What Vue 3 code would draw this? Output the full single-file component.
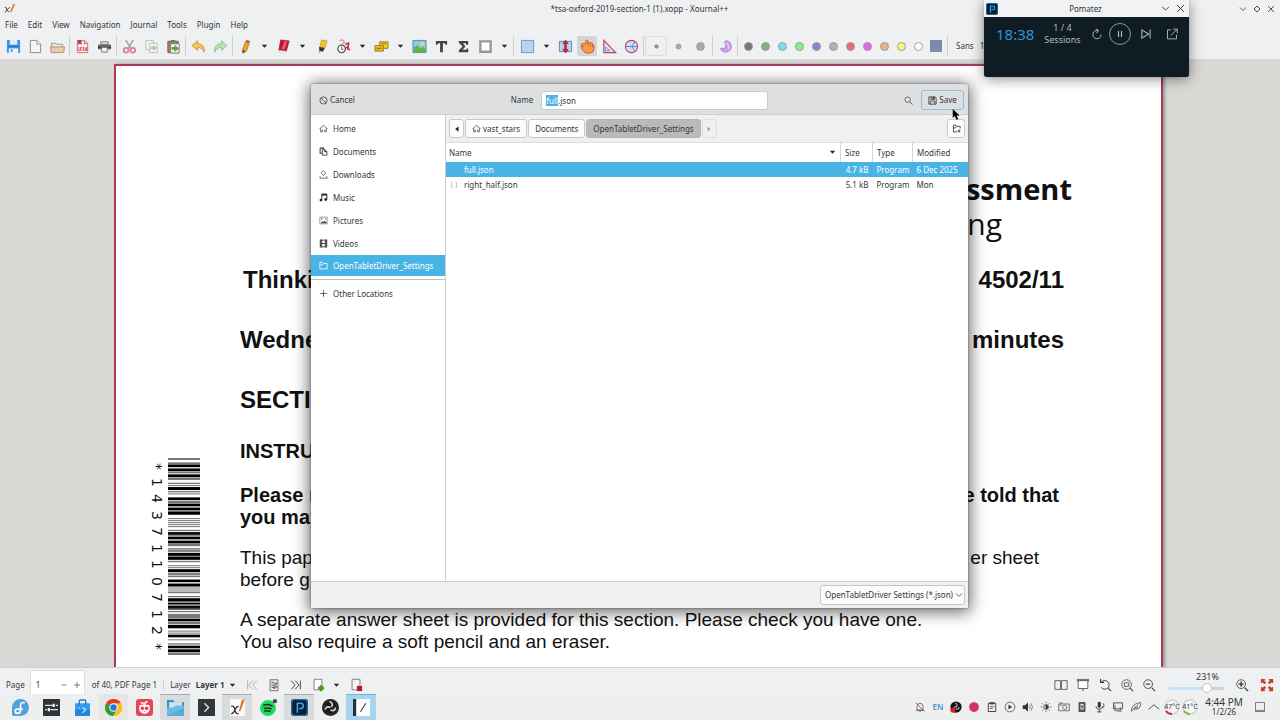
<template>
  <div class="desktop">
    <header class="titlebar">
      <Icon name="xournal" class="title-icon" />
      <h1 class="window-title">*tsa-oxford-2019-section-1 (1).xopp - Xournal++</h1>
      <div class="window-buttons">
        <button aria-label="Minimize"><Icon name="chevron" /></button>
        <button aria-label="Maximize"><Icon name="diamond" /></button>
        <button aria-label="Close"><Icon name="close" /></button>
      </div>
    </header>

    <nav class="menubar">
      <button v-for="item in menus" :key="item">{{ item }}</button>
    </nav>

    <div class="toolbar">
      <div v-for="(group, i) in toolGroups" :key="i" class="tool-group" :class="{ roomy: i === 4 }">
        <button
          v-for="(tool, j) in group"
          :key="j"
          :class="[tool === 'arrow' ? 'tool-arrow' : 'tool', { active: tool === 'hand', boxed: tool === 'dotSmall' }]"
          :aria-label="tool"
        >
          <Icon :name="tool" />
        </button>
      </div>
      <div class="tool-group palette">
        <button v-for="color in colors" :key="color" class="color" :aria-label="'Color ' + color">
          <span class="color-dot" :style="{ background: color }"></span>
        </button>
        <button class="color" aria-label="Custom color"><span class="color-square"></span></button>
      </div>
      <button class="font-button">Sans <span>1</span></button>
    </div>

    <main class="workspace">
      <article class="page">
        <div class="barcode">
          <div class="barcode-digits">
            <span v-for="(c, i) in '*1437110712*'" :key="i">{{ c }}</span>
          </div>
          <svg class="barcode-bars" viewBox="0 24 96 590" preserveAspectRatio="none">
            <rect v-for="(bar, i) in bars" :key="i" x="0" width="96" :y="bar[0]" :height="bar[1] - bar[0]" :fill="bar[2] ? '#000' : '#777'" />
          </svg>
        </div>
        <div class="page-text">
          <div class="logo-line strong">ssment</div>
          <div class="logo-line second">ng</div>
          <h2 class="indent"><span>Thinki</span><span>4502/11</span></h2>
          <h2><span>Wedne</span><span>minutes</span></h2>
          <h2><span>SECTI</span></h2>
          <h3>INSTRU</h3>
          <p class="bold">
            <span class="row"><span>Please r</span><span>e told that</span></span>
            <span class="row">you may</span>
          </p>
          <p class="short">
            <span class="row"><span>This pap</span><span>er sheet</span></span>
            <span class="row">before g</span>
          </p>
          <p>
            <span class="row">A separate answer sheet is provided for this section. Please check you have one.</span>
            <span class="row">You also require a soft pencil and an eraser.</span>
          </p>
        </div>
      </article>
    </main>

    <footer class="statusbar">
      <label for="page-number">Page</label>
      <div class="spinner">
        <input id="page-number" type="text" value="1" />
        <button aria-label="Previous page"><Icon name="minus" /></button>
        <button aria-label="Next page"><Icon name="plus" /></button>
      </div>
      <span class="page-count">of 40, PDF Page 1</span>
      <span class="layer-label">Layer</span>
      <button class="layer-button">Layer 1</button>
      <button class="tool-arrow" aria-label="Choose layer"><Icon name="arrow" /></button>
      <button v-for="name in ['first', 'notePage', 'last', 'pageAdd']" :key="name" class="tool" :aria-label="name"><Icon :name="name" /></button>
      <button class="tool-arrow" aria-label="Page options"><Icon name="arrow" /></button>
      <button class="tool" aria-label="Delete page"><Icon name="pageDelete" /></button>
      <div class="zoom-tools">
        <button v-for="name in ['dual', 'present', 'zoomReset', 'zoomFit', 'zoomOut']" :key="name" class="tool" :aria-label="name"><Icon :name="name" /></button>
        <div class="zoom-slider">
          <label for="zoom">231%</label>
          <input id="zoom" type="range" min="0" max="100" value="74" />
        </div>
        <button class="tool" aria-label="Zoom in"><Icon name="zoomIn" /></button>
        <button class="tool fullscreen" aria-label="Fullscreen"><Icon name="fullscreen" /></button>
      </div>
    </footer>

    <div class="taskbar">
      <button v-for="task in tasks" :key="task.icon" class="task" :class="task.state" :aria-label="task.icon">
        <Icon :name="task.icon" />
      </button>
      <div class="tray">
        <template v-for="item in tray" :key="item">
          <span v-if="item === 'EN'" class="tray-item lang">EN</span>
          <button v-else class="tray-item" :aria-label="item"><Icon :name="item" /></button>
        </template>
        <span class="temp"><Icon name="gaugeRed" /><span>47°C</span></span>
        <span class="temp"><Icon name="gaugeGreen" /><span>41°C</span></span>
        <div class="clock"><span class="time">4:44 PM</span><span>1/2/26</span></div>
        <button class="tray-item" aria-label="Show desktop"><Icon name="desktop" /></button>
      </div>
    </div>

    <div class="dialog-layer">
      <form class="dialog" role="dialog" aria-label="Save file" @submit.prevent>
        <div class="dialog-head">
          <button type="button" class="cancel"><Icon name="cancel" />Cancel</button>
          <div class="name-field">
            <label for="file-name">Name</label>
            <input id="file-name" ref="nameInput" type="text" value="full.json" />
          </div>
          <div class="head-actions">
            <button type="button" class="search" aria-label="Search"><Icon name="search" /></button>
            <button type="submit" class="save"><Icon name="floppy" />Save</button>
          </div>
        </div>

        <div class="dialog-body">
          <aside class="places">
            <button v-for="place in places" :key="place.label" type="button" class="place" :class="{ selected: place.selected }">
              <Icon :name="place.icon" />{{ place.label }}
            </button>
            <hr />
            <button type="button" class="place"><Icon name="plus" />Other Locations</button>
          </aside>

          <section class="files">
            <div class="pathbar">
              <button type="button" class="step" aria-label="Back"><Icon name="triLeft" /></button>
              <button type="button" class="crumb"><Icon name="home" />vast_stars</button>
              <button type="button" class="crumb">Documents</button>
              <button type="button" class="crumb current">OpenTabletDriver_Settings</button>
              <button type="button" class="step faded" aria-label="Forward"><Icon name="triRight" /></button>
              <button type="button" class="new-folder" aria-label="New folder"><Icon name="folderNew" /></button>
            </div>
            <table>
              <thead>
                <tr>
                  <th class="col-name"><span>Name<Icon name="arrow" /></span></th>
                  <th class="col-size">Size</th>
                  <th class="col-type">Type</th>
                  <th class="col-date">Modified</th>
                </tr>
              </thead>
              <tbody>
                <tr v-for="file in files" :key="file.name" :class="{ selected: file.selected }">
                  <td><span class="file-name"><Icon name="json" />{{ file.name }}</span></td>
                  <td class="size">{{ file.size }}</td>
                  <td>{{ file.type }}</td>
                  <td>{{ file.modified }}</td>
                </tr>
              </tbody>
            </table>
          </section>
        </div>

        <div class="dialog-foot">
          <div class="filter">
            <select aria-label="File type">
              <option>OpenTabletDriver Settings (*.json)</option>
            </select>
            <Icon name="chevron" />
          </div>
        </div>
        <Icon name="pointer" class="pointer" />
      </form>
    </div>

    <section class="pomatez">
      <div class="pomatez-title">
        <Icon name="pomatez" class="pomatez-logo" />
        <h2>Pomatez</h2>
        <button aria-label="Minimize timer"><Icon name="chevron" /></button>
        <button aria-label="Close timer"><Icon name="close" /></button>
      </div>
      <div class="pomatez-body">
        <span class="timer">18:38</span>
        <span class="sessions"><span>1 / 4</span><span>Sessions</span></span>
        <button aria-label="Restart"><Icon name="restart" /></button>
        <button class="pause" aria-label="Pause"><Icon name="pause" /></button>
        <button aria-label="Skip"><Icon name="skip" /></button>
        <button class="expand" aria-label="Expand"><Icon name="external" /></button>
      </div>
    </section>
  </div>
</template>

<script setup>
import { h, onMounted, ref } from "vue";

const icons = {
  xournal: '<path d="M1 6q2-1 2.500 2T7 12M8 6q-2 0-3.500 3T1 12" fill="none" stroke="#444" stroke-width="1.300"/><path d="M8 12l4-10 3-1-5 11z" fill="#d8752e"/>',
  chevron: '<path d="M2 5l6 6 6-6" fill="none" stroke="currentColor" stroke-width="1.600"/>',
  diamond: '<path d="M8 2l6 6-6 6-6-6z" fill="none" stroke="currentColor" stroke-width="1.800"/>',
  close: '<path d="M2 2l12 12M14 2L2 14" fill="none" stroke="currentColor" stroke-width="1.700"/>',
  arrow: '<path d="M2 4h12l-6 7z" fill="#222"/>',
  save: '<path d="M1 1h14v14H2l-1-1z" fill="#3f92e6"/><path d="M4 1h8v5H4z" fill="#dcecfb"/><path d="M3 10h10v5H3z" fill="#eef5fc"/><path d="M2 8h12" stroke="#1d6cc2"/><path d="M5 11h2v3H5z" fill="#3f92e6"/>',
  newDoc: '<path d="M2.500 1.500h7l4 4v9h-11z" fill="#f4f4f4" stroke="#888"/><path d="M9.500 1.500v4h4" fill="#fff" stroke="#888"/>',
  open: '<path d="M1.500 13V4.500h4l1 1h7V13z" fill="#eee4d2" stroke="#999"/><path d="M.5 8.500h15l-1 6h-13z" fill="#e9cda3" stroke="#a9947a"/>',
  pdf: '<path d="M2.500 1.500h8l3 3v10h-11z" fill="#f8eeee" stroke="#b77"/><path d="M3 1h4v5l-2-1-2 1z" fill="#c8364a"/><path d="M10 2v3h3" fill="none" stroke="#b55"/><path d="M3 8.500h10v4H3z" fill="#dd4b56"/><path d="M4 12V9h1v2M7 9v3h1V9M10 12V9h2M10 10.500h1.500" stroke="#fff" fill="none" stroke-width=".8"/>',
  print: '<path d="M4 3h8v3H4z" fill="#ddd" stroke="#777"/><path d="M1 6h14v5H1z" fill="#66696b"/><path d="M1 9h14" stroke="#333"/><path d="M5 9h6v5H5z" fill="#f5f5f5" stroke="#777"/>',
  cut: '<path d="M4 1l6 10M12 1L6 11" stroke="#aaa" stroke-width="1.800"/><circle cx="4.500" cy="12" r="2.500" fill="none" stroke="#dc8594" stroke-width="2"/><circle cx="11.500" cy="12" r="2.500" fill="none" stroke="#dc8594" stroke-width="2"/>',
  copy: '<g opacity=".5"><path d="M2 1.500h8v10H2z" fill="#f6f6f6" stroke="#888"/><path d="M6 4.500h8v10H6z" fill="#fff" stroke="#888"/><path d="M7 8h3V6l4 3.500-4 3.500v-2H7z" fill="#62b13c"/></g>',
  paste: '<path d="M2 2.500h11v12H2z" fill="#a5855a" stroke="#6f5a3c"/><path d="M5 1h5v3H5z" fill="#777"/><path d="M5 5h9v10H5z" fill="#f6f6f6" stroke="#777"/><path d="M6 8.500h3V6l5 4-5 4v-2.500H6z" fill="#58a52f"/>',
  undo: '<path d="M1 7l6-5v3c5 0 8 3 7 9-1-3-3-5-7-5v3z" fill="#f6c655" stroke="#c98e22" stroke-width=".9"/>',
  redo: '<path d="M15 7L9 2v3C4 5 1 8 2 14c1-3 3-5 7-5v3z" fill="#b5e2ad" stroke="#86c080" stroke-width=".9"/>',
  pencil: '<path d="M5 11L8 3l4 1-3 9-4 2z" fill="#f0a42c" stroke="#a5601b" stroke-width=".7"/><path d="M8 3l1-2 4 1-1 2z" fill="#cf4a3f"/><path d="M5 12v3l3-2z" fill="#333"/>',
  eraser: '<path d="M5 1l9 1-3 11-8-1z" fill="#c5122a" stroke="#8a1b2a" stroke-width=".7"/><path d="M9 2l3 .5-3 9-3-1z" fill="#e85b6a"/><path d="M3 12l8 1-1 2-7-1z" fill="#f2f2f2" stroke="#bbb" stroke-width=".4"/>',
  highlighter: '<path d="M8 1l6 1-2 7H6z" fill="#f4c136" stroke="#b58a2a" stroke-width=".6"/><path d="M5.500 8.500l6 1-2 4-4-1z" fill="#333"/><path d="M5 12.500l3 1-3 2z" fill="#e7bb2d"/>',
  recognizer: '<circle cx="6" cy="10.500" r="4" fill="#fff" stroke="#555" stroke-width="1.400"/><path d="M6 8v3h2" fill="none" stroke="#555"/><path d="M4 2q2-2 4 0t-1 3" fill="none" stroke="#e08a98" stroke-width="1.300"/><path d="M10 6q5-4 3 1t2 4M10 9h4" fill="none" stroke="#cf2b39" stroke-width="1.700"/>',
  shapes: '<path d="M6 3h9v7H6z" fill="#efc726" stroke="#9a8227"/><path d="M1 7h9v6H1z" fill="#e7b71e" stroke="#9a8227"/><path d="M3 10h5M8 5h5" stroke="#8a731f"/>',
  image: '<path d="M1 1.500h14v13H1z" fill="#8bcbf3" stroke="#5387b5"/><circle cx="11" cy="5" r="2" fill="#f6d540"/><path d="M1.500 14V10l4-4 4 4 2-2 3 3v3z" fill="#65b447"/>',
  text: '<path d="M2 2h12v4h-1.500l-1-1.500H9.500V14h-3V4.500h-2L3.500 6H2z" fill="#444"/>',
  sigma: '<path d="M3 2h10v4h-2l-.5-1.500H7.500L10 8l-3 3.500h4l.5-1.500H13v4H3v-2l4-4-4-4z" fill="#444"/>',
  square: '<path d="M2.500 2.500h11v11h-11z" fill="#fff" stroke="#999" stroke-width="2.600"/>',
  rect: '<path d="M1.500 1.500h13v13h-13z" fill="#b8d2f2" stroke="#7293c9"/>',
  vertical: '<path d="M1.500 2.500h13v11h-13z" fill="#b9d0ef" stroke="#6b7cab"/><path d="M8 1L5 5h2v6H5l3 4 3-4H9V5h2z" fill="#b52c3e" stroke="#7a1c2e" stroke-width=".5"/>',
  hand: '<path d="M1 6q2-2 4-1l1 1V2.500q0-1.500 1.200-1.500T8.500 2.500V5q0-1.500 1.200-1.500T11 5q0-1 1.200-1t1.200 1.500V6.500q1.500-.5 1.500 1V10q0 4.500-4 5H7q-2 0-3-2L1 9q-.5-2 1.500-1.500L4 8.500z" fill="#f69a4e" stroke="#cf5a24"/><path d="M8.500 5v3M11 5v3M13.300 6.500V9" stroke="#cf5a24" stroke-width=".7"/>',
  setsquare: '<path d="M2 1.500l12.500 13H2z" fill="#dbe4f6" stroke="#b94660" stroke-width="1.300"/><path d="M4 8.500l4 4H4z" fill="#f7f7fb" stroke="#6b86c9"/>',
  compass: '<circle cx="8" cy="8" r="6.500" fill="#cfdef5" stroke="#b94660" stroke-width="1.200"/><path d="M2 8h12M8 8l4-5M8 8l4 5" stroke="#5c7ec5" fill="none"/>',
  dotSmall: '<circle cx="8" cy="8" r="1.900" fill="#999" stroke="#777" stroke-width=".7"/>',
  dotMedium: '<circle cx="8" cy="8" r="2.700" fill="#aaa" stroke="#888" stroke-width=".6"/>',
  dotLarge: '<circle cx="8" cy="8" r="4.200" fill="#aaa" stroke="#888" stroke-width=".6"/>',
  fill: '<path d="M8 2a6 6 0 1 1-5 9q-1-2 2-1t3-3-1-3 1-2z" fill="#c9a2e8" stroke="#a583c5"/><path d="M8 4q5 2 3 7" fill="none" stroke="#e4cdf5" stroke-width="1.500"/>',
  minus: '<path d="M3 8h10" stroke="currentColor" stroke-width="1.200"/>',
  plus: '<path d="M2 8h12M8 2v12" stroke="currentColor" stroke-width="1.300"/>',
  first: '<path d="M3 3v10M9 3L4.500 8 9 13M13.500 3L9 8l4.500 5" fill="none" stroke="#aaa"/>',
  last: '<path d="M13 3v10M7 3l4.500 5L7 13M2.500 3L7 8l-4.500 5" fill="none" stroke="#444" stroke-width="1.100"/>',
  notePage: '<path d="M3.500 2h9v12.500h-9z" fill="#eee" stroke="#666"/><path d="M5 5h3l1 1.500h2V5M5 11h2v-1h1v2h1v-2h2v1M5 8h6" fill="none" stroke="#444"/>',
  pageAdd: '<path d="M3.500 1.500h9v12h-9z" fill="#fff" stroke="#777"/><path d="M11.500 8v7M8 11.500h7" stroke="#4c9a26" stroke-width="3"/>',
  pageDelete: '<path d="M3.500 1.500h9v12h-9z" fill="#f5f5f5" stroke="#777"/><path d="M9 9h6v6H9z" fill="#c3272b"/><path d="M9.500 9.500l5 5M14.500 9.500l-5 5" stroke="#7e1515"/>',
  dual: '<path d="M1 3h6.500v10H1zM8.500 3H15v10H8.500z" fill="none" stroke="#555"/>',
  present: '<path d="M1 2.500h14" stroke="#777" stroke-width="3"/><path d="M2.500 3h11v9h-11z" fill="#fff" stroke="#555"/><path d="M8 12v3" stroke="#444"/>',
  zoomReset: '<path d="M4 4.500a5 5 0 1 1-.5 6" fill="none" stroke="#444" stroke-width="1.100"/><path d="M11.500 11.500L15 15" stroke="#444" stroke-width="1.400"/><path d="M3 1v4h4" fill="none" stroke="#333" stroke-width="1.300"/>',
  zoomFit: '<circle cx="7.500" cy="7.500" r="5.500" fill="none" stroke="#555"/><path d="M5 5.500h5v4H5z" fill="none" stroke="#555"/><path d="M11.500 11.500L15 15" stroke="#444" stroke-width="1.300"/>',
  zoomOut: '<circle cx="7" cy="7" r="5" fill="none" stroke="#444"/><path d="M4.500 7h5M11 11l4 4" stroke="#444" stroke-width="1.400"/>',
  zoomIn: '<circle cx="7" cy="7" r="5" fill="none" stroke="#444"/><path d="M4 7h6M7 4v6M11 11l4 4" stroke="#333" stroke-width="1.600"/>',
  fullscreen: '<path d="M1 1h5L5 3l2 2-2 2-2-2-2 1zM15 1h-5l1 2-2 2 2 2 2-2 2 1zM1 15h5l-1-2 2-2-2-2-2 2-2-1zM15 15h-5l1-2-2-2 2-2 2 2 2-1z" fill="#c93f26"/>',
  fedora: '<path d="M8 0a8 8 0 1 1 0 16H1q-1 0-1-1V8a8 8 0 0 1 8-8z" fill="#51a2da"/><path d="M12 3.500q-4-1-4 3v4q0 3-3 3-2 0-2-2t2-2h5" fill="none" stroke="#fff" stroke-width="1.500"/>',
  settings: '<path d="M0 0h16v16H0z" fill="#2e3439"/><path d="M2 6h7M12 6h2M2 10h2M7 10h7" stroke="#dfe3e6" stroke-width="1.300"/><path d="M9 4.500h2v3H9zM4.500 8.500h2v3h-2z" fill="#fff"/>',
  store: '<path d="M1 4h14v11q0 1-1 1H2q-1 0-1-1z" fill="#2d9cf0"/><path d="M1 10h14v5q0 1-1 1H2q-1 0-1-1z" fill="#2186dd"/><path d="M5 6V2q0-1 1-1h4q1 0 1 1v4" fill="none" stroke="#2a7cc2" stroke-width="1.300"/><path d="M8 8l3 2-3 3M5 8v1" fill="none" stroke="#d5efff"/>',
  chrome: '<circle cx="8" cy="8" r="8" fill="#fbc116"/><path d="M8 8L1.100 4A8 8 0 0 1 15 4z" fill="#e33b2e"/><path d="M1.100 4A8 8 0 0 0 7.500 16L11 10 8 8z" fill="#269f42"/><path d="M8 4h7a8 8 0 0 1-7 12l3.500-6z" fill="#fbc116"/><circle cx="8" cy="8" r="4" fill="#fff"/><circle cx="8" cy="8" r="3" fill="#2c72e8"/>',
  cherry: '<rect width="16" height="16" rx="3" fill="#e8445c"/><path d="M8 5.500q0-3 3-3M8 5.500Q6 2.500 4.500 4" fill="none" stroke="#fff" stroke-width="1.400"/><path d="M3 7.500q0-2 2-2h6q2 0 2 2 1 5-5 6.500-6-1.500-5-6.500z" fill="#fff"/><circle cx="6" cy="8.800" r="1.700" fill="#e8445c"/><circle cx="10" cy="8.800" r="1.700" fill="#e8445c"/><path d="M7 12l1-1 1 1z" fill="#e8445c"/>',
  folder: '<path d="M0 1h6l1 2h9v12H0z" fill="#3a8fbd"/><path d="M2 3h12v6H2z" fill="#cfe5ef"/><path d="M0 8h6l2-2h8v10H0z" fill="#69bde6"/><path d="M0 16L16 8v8z" fill="#55acd9"/>',
  terminal: '<path d="M0 0h16v16H0z" fill="#30363b"/><path d="M6 4l4 4-4 4" fill="none" stroke="#e8eaec" stroke-width="1.200"/>',
  xournalApp: '<path d="M1 0h14v16H1z" fill="#fafafa"/><path d="M2 7q3-1 3.500 3T9 14M9 7q-2 0-3.500 3.500T2 14" fill="none" stroke="#333" stroke-width="1.200"/><path d="M9 12l3-11 3-1-4 11z" fill="#e6762f"/>',
  spotify: '<circle cx="7.500" cy="8.500" r="7.500" fill="#25d865"/><path d="M3 6q5-2 9 1M3.500 9q4-1.500 7.500.5M4 11.500q3-1 6 .5" fill="none" stroke="#16351f" stroke-width="1.400"/><circle cx="14" cy="2" r="2" fill="#444"/>',
  pomatez: '<rect width="16" height="16" rx="3" fill="#0c1f30"/><rect x=".7" y=".7" width="14.600" height="14.600" rx="2.500" fill="none" stroke="#1e83c6" stroke-width="1"/><path d="M6 13V4h3q2.500 0 2.500 2.500T9 9H7.500" fill="none" stroke="#3ea8ef" stroke-width="1.500"/>',
  obs: '<circle cx="8" cy="8" r="8" fill="#1c1b1c"/><path d="M7 2.500q4 1 2 5M12.500 8q0 4-4.500 2.500M3 10q1-4 5-2" fill="none" stroke="#d5d5d5" stroke-width="1.600"/><circle cx="8" cy="8" r="6.500" fill="none" stroke="#444" stroke-width=".6"/>',
  note: '<path d="M0 0h16v16H0z" fill="#fdfdfd"/><path d="M0 0h3v16H0z" fill="#27323a"/><path d="M7 12l5-8" stroke="#333"/>',
  bell: '<path d="M4 12V7q0-4 4-4t4 4v5zM2.500 12.500h11M7 14h2" fill="none" stroke="#555"/><path d="M2 2l12 12" stroke="#c33a55" stroke-width="1.200"/>',
  obsTray: '<circle cx="8" cy="8" r="7.500" fill="#151515"/><path d="M7 3q4 1 2 4.500M12 8q0 4-4 2.500M5 9q1-2 4-1" fill="none" stroke="#ddd" stroke-width="1.300"/><circle cx="4" cy="12" r="3.500" fill="#e01b24"/>',
  record: '<circle cx="8" cy="8" r="6.500" fill="#d6335c"/>',
  clipboard: '<path d="M3 3h10v11H3z" fill="none" stroke="#444" stroke-width="1.300"/><path d="M5 1.500h6v3H5z" fill="#444"/><path d="M5 7.500h6M5 10h4" stroke="#444"/>',
  play: '<circle cx="8" cy="8" r="6.500" fill="none" stroke="#444"/><path d="M6 5l5 3-5 3z" fill="#333"/>',
  volume: '<path d="M1 5.500h3L8 2v12l-4-3.500H1z" fill="#333"/><path d="M10 5q2 3 0 6M12 3q4 5 0 10" fill="none" stroke="#666"/>',
  brightness: '<circle cx="8" cy="8" r="3" fill="none" stroke="#444" stroke-width="1.200"/><path d="M8 5v6a3 3 0 0 0 0-6M8 1v2M8 13v2M1 8h2M13 8h2M3 3l1.500 1.500M11.500 11.500L13 13M13 3l-1.500 1.500M4.500 11.500L3 13" fill="#333" stroke="#444"/>',
  camera: '<path d="M1 4h14v9H1z" fill="none" stroke="#555" stroke-width="1.100"/><circle cx="9" cy="8.500" r="2.800" fill="none" stroke="#555"/><path d="M2 2.500h4M3 6h2" stroke="#555"/>',
  chip: '<path d="M4 2h8v12H4z" fill="#666" stroke="#333"/><path d="M6 4h4v7H6z" fill="#ddd"/><path d="M7 6h2v3H7z" fill="#333"/>',
  mic: '<path d="M5 2q2.500-2 4 0v6q-2 2-4 0z" fill="#333"/><path d="M2.500 7q0 4 4.500 4t4.500-4M7 11v4M4 14.500h6M12 3q3 3 0 6" fill="none" stroke="#444" stroke-width="1.200"/>',
  display: '<path d="M2 2.500h12v8H2z" fill="none" stroke="#444" stroke-width="1.200"/><path d="M4 5v8h5M8 13.500h5M11 8v5" fill="none" stroke="#444"/>',
  leaf: '<path d="M2 14Q1 4 14 2q1 10-9 9M3 13q3-5 8-8M6 9h5" fill="none" stroke="#444"/>',
  up: '<path d="M1 11l7-6 7 6" fill="none" stroke="#444" stroke-width="1.200"/>',
  gaugeRed: '<circle cx="8" cy="8" r="7" fill="#f7f7f7" stroke="#cfd0d1" stroke-width="1.500"/><path d="M2 12q2 3 6 3" fill="none" stroke="#d8234c" stroke-width="2"/>',
  gaugeGreen: '<circle cx="8" cy="8" r="7" fill="#f7f7f7" stroke="#cfd0d1" stroke-width="1.500"/><path d="M2 12q2 3 6 3" fill="none" stroke="#77c12a" stroke-width="2"/>',
  desktop: '<path d="M2 2h12v12H2z" fill="none" stroke="#555"/><path d="M2 12.500h12" stroke="#555"/>',
  cancel: '<circle cx="8" cy="8" r="6.300" fill="none" stroke="#444" stroke-width="1.500"/><path d="M3.500 3.500l9 9" stroke="#444" stroke-width="1.500"/>',
  search: '<circle cx="6.500" cy="6.500" r="4.800" fill="none" stroke="#444" stroke-width="1.300"/><path d="M10 10l5 5" stroke="#444" stroke-width="1.500"/>',
  floppy: '<path d="M1.500 1.500h11l2 2v11h-13z" fill="none" stroke="#333" stroke-width="1.400"/><path d="M5 2v4h6V2M4 14.500V9h8v5.500" fill="none" stroke="#333" stroke-width="1.400"/><path d="M8 2h3v4H8z" fill="#333"/>',
  home: '<path d="M1 9l7-7 7 7M3 8v6h3v-4M13 8v6h-2M10 10v4" fill="none" stroke="#444" stroke-width="1.400"/>',
  documents: '<path d="M2 2v9h3M2 2h6v2" fill="none" stroke="#333" stroke-width="1.800"/><path d="M6 4.500h4l4 4v6H6z" fill="none" stroke="#333" stroke-width="1.500"/><path d="M10 4.500v4h4" fill="#333" stroke="#333"/>',
  downloads: '<path d="M8 1l4 4-4 5-4-5zM1 14.500h14M2 11v3M14 11v3" fill="none" stroke="#444" stroke-width="1.300"/>',
  music: '<path d="M5 12V2h9v9" fill="none" stroke="#222" stroke-width="1.600"/><path d="M5 3h9" stroke="#222" stroke-width="3"/><circle cx="3.500" cy="12.500" r="2.500" fill="#222"/><circle cx="12" cy="11.500" r="2.500" fill="#222"/>',
  pictures: '<path d="M1.500 2h13v12h-13z" fill="none" stroke="#555"/><path d="M3 13l3-4 2 2 2-3 4 5zM4 4h2v2H4z" fill="#444"/><path d="M12 4v3" stroke="#444"/>',
  videos: '<path d="M2 1.500h3v13H2zM11 1.500h3v13h-3z" fill="#333" stroke="#333"/><path d="M5 2h6M5 8h6M5 14h6" stroke="#333" stroke-width="1.500"/><path d="M3 4h1M3 7h1M3 10h1M3 13h1M12 4h1M12 7h1M12 10h1M12 13h1" stroke="#eee"/>',
  folderLine: '<path d="M1.500 14V2.500h5l1.500 2h6.500V14zM1.500 7H6l2-2" fill="none" stroke="currentColor" stroke-width="1.400"/>',
  folderNew: '<path d="M9 14H2.500V2h4L8 4h6.500v4M2.500 7H6l2-2" fill="none" stroke="#333" stroke-width="1.500"/><path d="M12.500 10v5M10 12.500h5" stroke="#333" stroke-width="1.700"/>',
  triLeft: '<path d="M12 1v14L3 8z" fill="#222"/>',
  triRight: '<path d="M4 2v12l8-6z" fill="#999"/>',
  json: '<path d="M5 2Q3 2 3 4v3L2 8l1 1v3q0 2 2 2M11 2q2 0 2 2v3l1 1-1 1v3q0 2-2 2" fill="none" stroke="#999" stroke-width="1.200"/>',
  pointer: '<path d="M4 0v13l3-3 2.500 5.500 2.500-1L9.500 9.500H14z" fill="#000"/>',
  restart: '<path d="M13.500 9a5.500 5.500 0 1 1-4-5.500M6.500 .8L10 3.500 7 7" fill="none" stroke="currentColor" stroke-width="1.300"/>',
  pause: '<path d="M6 4v8M10 4v8" stroke="currentColor" stroke-width="1.600"/>',
  skip: '<path d="M2.500 2.500v11l9-5.500zM13.500 2v12" fill="none" stroke="currentColor" stroke-width="1.400"/>',
  external: '<path d="M7 2.500H2v12h12V9M9.500 1.500H15V7M15 1.500L6.500 10" fill="none" stroke="currentColor" stroke-width="1.200"/>',
};

const Icon = (props) => h("svg", { viewBox: "0 0 16 16", class: "icon", "aria-hidden": "true", innerHTML: icons[props.name] });
Icon.props = ["name"];

const menus = ["File", "Edit", "View", "Navigation", "Journal", "Tools", "Plugin", "Help"];

const toolGroups = [
  ["save", "newDoc", "open"],
  ["pdf", "print"],
  ["cut", "copy", "paste"],
  ["undo", "redo"],
  ["pencil", "arrow", "eraser", "arrow", "highlighter", "recognizer", "arrow", "shapes", "arrow", "image", "text", "sigma", "square", "arrow"],
  ["rect", "arrow", "vertical", "hand", "setsquare", "compass"],
  ["dotSmall", "dotMedium", "dotLarge"],
  ["fill"],
];

const colors = ["#777777", "#7db579", "#7fdcf0", "#80f58c", "#8a83d4", "#b0b0b0", "#ea6878", "#e763e8", "#ecb083", "#f6f67c", "#ffffff"];

// [top, bottom, solid]
const bars = [
  [24, 30], [37, 44], [44, 51, 1], [53, 57], [57, 63, 1], [64, 70], [73, 81, 1], [82, 90],
  [98, 102], [105, 108], [111, 120, 1], [123, 127], [130, 133],
  [142, 150, 1], [152, 160], [161, 168, 1], [169, 172], [173, 181, 1], [184, 194, 1],
  [204, 207], [210, 213], [216, 219], [222, 225], [228, 231],
  [239, 243], [246, 254, 1], [255, 259], [260, 267, 1], [268, 271], [272, 280, 1], [281, 288],
  [294, 298], [299, 305], [308, 317, 1], [319, 329, 1], [332, 336],
  [345, 348], [351, 354], [357, 366, 1], [368, 374], [376, 381],
  [388, 396, 1], [400, 409, 1], [412, 415], [418, 421], [424, 429],
  [437, 441], [444, 454, 1], [457, 463, 1], [466, 473, 1], [474, 478, 1], [482, 486],
  [491, 505], [506, 513, 1], [514, 522], [524, 534, 1],
  [541, 544], [547, 550], [553, 561, 1], [567, 570],
  [579, 583], [586, 594, 1], [597, 606, 1], [608, 614],
];

const tasks = [
  { icon: "fedora" },
  { icon: "settings" },
  { icon: "store" },
  { icon: "chrome", state: "soft" },
  { icon: "cherry" },
  { icon: "folder", state: "running" },
  { icon: "terminal" },
  { icon: "xournalApp", state: "running" },
  { icon: "spotify" },
  { icon: "pomatez", state: "running" },
  { icon: "obs" },
  { icon: "note", state: "focused" },
];

const tray = ["bell", "EN", "obsTray", "record", "clipboard", "play", "volume", "brightness", "camera", "chip", "mic", "display", "leaf", "up"];

const places = [
  { icon: "home", label: "Home" },
  { icon: "documents", label: "Documents" },
  { icon: "downloads", label: "Downloads" },
  { icon: "music", label: "Music" },
  { icon: "pictures", label: "Pictures" },
  { icon: "videos", label: "Videos" },
  { icon: "folderLine", label: "OpenTabletDriver_Settings", selected: true },
];

const files = [
  { name: "full.json", size: "4.7 kB", type: "Program", modified: "6 Dec 2025", selected: true },
  { name: "right_half.json", size: "5.1 kB", type: "Program", modified: "Mon" },
];

const nameInput = ref(null);

onMounted(() => {
  nameInput.value.focus();
  nameInput.value.setSelectionRange(0, 4);
});
</script>

<style>
body {
  margin: 0;
}
</style>

<style scoped>
.desktop {
  position: relative;
  display: flex;
  flex-direction: column;
  height: 100vh;
  overflow: hidden;
  background: #eff0f1;
  color: #33373a;
  font-family: "Noto Sans", sans-serif;
  font-size: 8px;
  line-height: 12px;
}

button,
input,
select {
  margin: 0;
  padding: 0;
  border: 0;
  background: none;
  color: inherit;
  font: inherit;
}

button {
  display: flex;
  align-items: center;
  justify-content: center;
  white-space: nowrap;
}

h1,
h2,
h3,
p {
  margin: 0;
  font: inherit;
}

.icon {
  display: block;
  width: 16px;
  height: 16px;
  flex-shrink: 0;
}

/* main window */
.titlebar {
  display: flex;
  align-items: center;
  height: 17px;
  padding: 0 5px 0 4px;
}

.title-icon {
  width: 12px;
  height: 12px;
}

.window-title {
  flex: 1;
  padding-left: 24px;
  text-align: center;
}

.window-buttons {
  display: flex;
  gap: 6px;
}

.window-buttons .icon {
  width: 8px;
  height: 8px;
}

.menubar {
  display: flex;
  gap: 10px;
  height: 16px;
  padding-left: 5px;
}

.toolbar {
  display: flex;
  align-items: center;
  height: 26px;
  padding-left: 2px;
}

.tool-group {
  display: flex;
  align-items: center;
  height: 20px;
  padding-right: 1px;
  margin-right: 1px;
  border-right: 1px solid #ccced0;
}

.roomy {
  margin-right: 2px;
}

.palette {
  padding-right: 3px;
  padding-left: 1px;
}

.tool {
  width: 22px;
  height: 20px;
}

.tool .icon {
  width: 15px;
  height: 15px;
}

.tool-arrow {
  width: 16px;
  height: 20px;
}

.tool-arrow .icon {
  width: 7px;
  height: 7px;
}

.tool.active {
  width: 20px;
  margin: 0 1px;
  border-radius: 2px;
  background: #d3d4d5;
}

.tool.boxed {
  border: 1px solid #dcdcdd;
  border-radius: 2px;
  box-sizing: border-box;
}

.color {
  width: 17px;
  height: 20px;
}

.color-dot {
  width: 7px;
  height: 7px;
  border: 1px solid #999c9e;
  border-radius: 50%;
}

.color-square {
  width: 12px;
  height: 12px;
  background: #7b8aad;
}

.font-button {
  gap: 6px;
  padding-left: 7px;
}

/* document */
.workspace {
  flex: 1;
  min-height: 0;
  padding: 5px 117px 0 114px;
  overflow: hidden;
  background: #d9d8d4;
  border-bottom: 1px solid #cfd0d1;
}

.page {
  display: flex;
  border: 2px solid #ab3a50;
  background: #fff;
  box-shadow: 2px 0 3px #99989a;
  color: #111;
  font-family: "Liberation Sans", Arial, sans-serif;
}

.barcode {
  display: flex;
  gap: 5px;
  height: 197px;
  margin: 392px 40px 200px 35px;
}

.barcode-digits {
  display: flex;
  flex-direction: column;
  justify-content: space-between;
  width: 12px;
  font-family: "DejaVu Sans", sans-serif;
  font-size: 14px;
  line-height: 12px;
}

.barcode-digits span {
  height: 16px;
  writing-mode: vertical-rl;
  text-align: center;
}

.barcode-bars {
  width: 32px;
  height: 197px;
}

.page-text {
  flex: 1;
  padding: 105px 97px 0 0;
  font-size: 20px;
  line-height: 22px;
  white-space: nowrap;
}

.logo-line {
  margin-right: -8px;
  font-family: "Open Sans", sans-serif;
  font-size: 30px;
  line-height: 35px;
  text-align: right;
}

.logo-line.strong {
  font-size: 29px;
  font-weight: 700;
}

.logo-line.second {
  margin-right: 62px;
  margin-bottom: 25px;
}

h2,
.row {
  display: flex;
  justify-content: space-between;
}

.page h2 {
  margin-bottom: 32px;
  font-size: 24px;
  font-weight: 700;
  line-height: 28px;
}

.page .indent {
  padding-left: 3px;
}

.page h3 {
  margin: -6px 0 22px;
  font-weight: 700;
}

.page p {
  padding-right: 5px;
  margin-bottom: 18px;
  font-size: 19px;
}

.page .bold {
  margin-bottom: 19px;
  font-size: 20px;
  font-weight: 700;
}

.page .short {
  padding-right: 25px;
}

/* page and zoom bar */
.statusbar {
  display: flex;
  align-items: center;
  height: 26px;
  padding: 0 2px 0 6px;
}

.statusbar .tool,
.statusbar .tool-arrow {
  margin-top: 8px;
}

.statusbar .tool .icon {
  width: 14px;
  height: 14px;
}

.statusbar > label,
.page-count,
.layer-label,
.layer-button {
  margin-top: 8px;
}

.spinner {
  display: flex;
  align-items: center;
  align-self: flex-end;
  width: 55px;
  height: 24px;
  margin-left: 5px;
  background: #fff;
  border: 1px solid #dcdddd;
  border-bottom: 0;
  box-sizing: border-box;
}

.spinner input {
  flex: 1;
  min-width: 0;
  padding: 4px 0 0 5px;
}

.spinner button {
  width: 13px;
  padding-top: 4px;
}

.spinner .icon {
  width: 8px;
  height: 8px;
}

.page-count {
  padding: 0 6px 0 7px;
  margin-right: 6px;
  border-right: 1px solid #cfd0d1;
}

.layer-button {
  padding-left: 5px;
  font-weight: 700;
}

.zoom-tools {
  display: flex;
  align-items: center;
  height: 26px;
  margin-left: auto;
}

.zoom-slider {
  display: flex;
  flex-direction: column;
  width: 56px;
  margin: 2px 7px 0 8px;
}

.zoom-slider label {
  padding-left: 28px;
  font-size: 9px;
}

.zoom-slider input {
  height: 10px;
  appearance: none;
}

.zoom-slider input::-webkit-slider-runnable-track {
  height: 3px;
  border-radius: 2px;
  background: linear-gradient(90deg, #c8e2f4 73%, #d0d2d3 73%);
}

.zoom-slider input::-webkit-slider-thumb {
  width: 10px;
  height: 10px;
  margin-top: -4px;
  appearance: none;
  border: 1px solid #c0c2c4;
  border-radius: 50%;
  background: #fff;
  box-sizing: border-box;
}

.zoom-tools .fullscreen {
  margin-left: 3px;
}

/* taskbar */
.taskbar {
  display: flex;
  align-items: center;
  height: 26px;
  padding: 0 11px 0 5px;
  background: #eeefef;
}

.task {
  width: 30px;
  height: 26px;
  margin-right: 1px;
  border-top: 1px solid transparent;
  box-sizing: border-box;
}

.task .icon {
  width: 17px;
  height: 17px;
}

.task.soft {
  background: #e5e6e6;
}

.task.running {
  border-color: #aaadaf;
  background: #dadbdc;
}

.task.focused {
  border-color: #69b4df;
  background: #a8d5ed;
}

.tray {
  display: flex;
  align-items: center;
  margin-left: auto;
}

.tray-item {
  width: 18px;
  height: 24px;
  text-align: center;
}

.tray-item .icon {
  width: 12px;
  height: 12px;
}

.lang {
  color: #4a94c4;
  font-weight: 600;
  line-height: 24px;
}

.temp {
  display: grid;
  place-items: center;
  width: 18px;
}

.temp > * {
  grid-area: 1 / 1;
}

.temp span {
  font-size: 7px;
}

.clock {
  display: flex;
  flex-direction: column;
  align-items: center;
  width: 50px;
  margin-right: 2px;
  line-height: 10px;
}

.time {
  font-size: 10px;
}

/* save dialog */
.dialog-layer {
  position: absolute;
  inset: 0;
  display: flex;
  padding: 84px 312px 112px 311px;
}

.dialog {
  position: relative;
  display: flex;
  flex: 1;
  flex-direction: column;
  min-width: 0;
  border-radius: 3px 3px 0 0;
  background: #eff0f1;
  box-shadow: 0 2px 16px 2px rgba(0, 0, 0, 0.6), 0 0 2px #777;
}

.dialog-head {
  display: grid;
  grid-template-columns: 1fr auto 1fr;
  align-items: center;
  height: 31px;
  padding: 2px 4px 0;
  border-bottom: 1px solid #cdcfd0;
  border-radius: 3px 3px 0 0;
  background: #dddfe0;
  box-sizing: border-box;
}

.cancel,
.save {
  gap: 2px;
}

.cancel {
  justify-self: start;
  padding-left: 4px;
}

.cancel .icon,
.save .icon,
.search .icon {
  width: 9px;
  height: 9px;
}

.name-field {
  display: flex;
  align-items: center;
  gap: 8px;
}

.name-field input {
  width: 227px;
  height: 19px;
  padding: 0 4px;
  border: 1px solid #c9cbcd;
  border-radius: 3px;
  background: #fff;
  box-sizing: border-box;
  outline: none;
  caret-color: transparent;
}

.name-field input::selection {
  background: #48b3e5;
  color: #fff;
}

.head-actions {
  display: flex;
  gap: 8px;
  justify-content: flex-end;
}

.save {
  width: 43px;
  height: 20px;
  border: 1px solid #8fc0de;
  border-radius: 3px;
  box-sizing: border-box;
}

.dialog-body {
  display: flex;
  flex: 1;
  min-height: 0;
}

.places {
  width: 134px;
  padding-top: 2px;
  border-right: 1px solid #cdcfd0;
  background: #fff;
}

.place {
  justify-content: flex-start;
  gap: 5px;
  width: 100%;
  height: 23px;
  padding-left: 8px;
}

.place .icon {
  width: 9px;
  height: 9px;
}

.place.selected {
  height: 21px;
  background: #48b3e5;
  color: #fff;
}

.places hr {
  margin: 3px 0 2px;
  border: 0;
  border-top: 1px solid #bfc1c3;
}

.files {
  flex: 1;
  min-width: 0;
  background: #fff;
}

.pathbar {
  display: flex;
  align-items: center;
  gap: 1px;
  height: 27px;
  padding: 0 3px;
  background: #eff0f1;
  border-bottom: 1px solid #dcdddd;
}

.pathbar button {
  height: 19px;
  border: 1px solid #c6c8ca;
  border-radius: 3px;
  background: #fcfcfc;
  box-sizing: border-box;
}

.pathbar .icon {
  width: 9px;
  height: 9px;
}

.pathbar .step {
  width: 15px;
}

.pathbar .step .icon {
  width: 6px;
  height: 6px;
}

.pathbar .faded {
  border-color: #dfe0e1;
  background: none;
}

.pathbar .crumb {
  gap: 2px;
  padding: 0 6px;
}

.pathbar .current {
  border-color: #b4b5b6;
  background: #b9babb;
}

.pathbar .new-folder {
  width: 18px;
  margin-left: auto;
}

table {
  width: 100%;
  border-collapse: collapse;
  table-layout: fixed;
}

th {
  height: 19px;
  padding: 0 4px;
  border-right: 1px solid #d5d6d7;
  font-weight: 400;
  text-align: left;
}

th:first-child,
td:first-child {
  padding-left: 3px;
}

th:last-child {
  border-right: 0;
}

th span {
  display: flex;
  align-items: center;
  justify-content: space-between;
}

th .icon {
  width: 7px;
  height: 7px;
}

.col-size {
  width: 23px;
}

.col-type {
  width: 31px;
}

.col-date {
  width: 47px;
}

td {
  height: 15px;
  padding: 0 4px;
  white-space: nowrap;
}

tr.selected td {
  background: #48b3e5;
  color: #fff;
}

.file-name {
  display: flex;
  align-items: center;
  gap: 6px;
}

.file-name .icon {
  width: 8px;
  height: 8px;
  margin-left: 1px;
}

tr.selected .icon {
  opacity: 0.4;
}

.size {
  text-align: right;
}

.dialog-foot {
  display: flex;
  align-items: center;
  justify-content: flex-end;
  height: 26px;
  padding-right: 3px;
  border-top: 1px solid #cdcfd0;
}

.filter {
  display: grid;
  align-items: center;
  justify-items: end;
}

.filter > * {
  grid-area: 1 / 1;
}

.filter select {
  width: 145px;
  height: 20px;
  padding: 0 4px;
  border: 1px solid #c6c8ca;
  border-radius: 3px;
  background: #fcfcfc;
  appearance: none;
}

.filter .icon {
  width: 8px;
  height: 8px;
  margin-right: 2px;
  pointer-events: none;
}

.pointer {
  position: absolute;
  top: 25px;
  right: 7px;
  width: 11px;
  height: 11px;
}

/* timer window */
.pomatez {
  position: absolute;
  top: 0;
  right: 91px;
  width: 205px;
  border-radius: 3px;
  background: #0f1c24;
  box-shadow: 0 2px 14px rgba(0, 0, 0, 0.45), 0 0 1px #777;
}

.pomatez-title {
  display: flex;
  align-items: center;
  gap: 6px;
  height: 17px;
  padding: 0 4px 0 2px;
  background: #f1f2f3;
}

.pomatez-title h2 {
  flex: 1;
  display: block;
  padding-left: 12px;
  text-align: center;
}

.pomatez-title .icon {
  width: 9px;
  height: 9px;
}

.pomatez-title .pomatez-logo {
  width: 12px;
  height: 12px;
}

.pomatez-body {
  display: flex;
  align-items: center;
  height: 34px;
  padding: 0 11px 26px 12px;
  color: #b4bcc1;
}

.pomatez-body .icon {
  width: 12px;
  height: 12px;
}

.timer {
  color: #2c93dd;
  font-size: 15px;
}

.sessions {
  display: flex;
  flex-direction: column;
  align-items: center;
  margin: 0 10px;
  font-size: 9px;
}

.pomatez .pause {
  width: 22px;
  height: 22px;
  margin: 0 9px 0 6px;
  border: 1px solid #8d989f;
  border-radius: 50%;
  box-sizing: border-box;
}

.pomatez .expand {
  margin-left: auto;
}
</style>
